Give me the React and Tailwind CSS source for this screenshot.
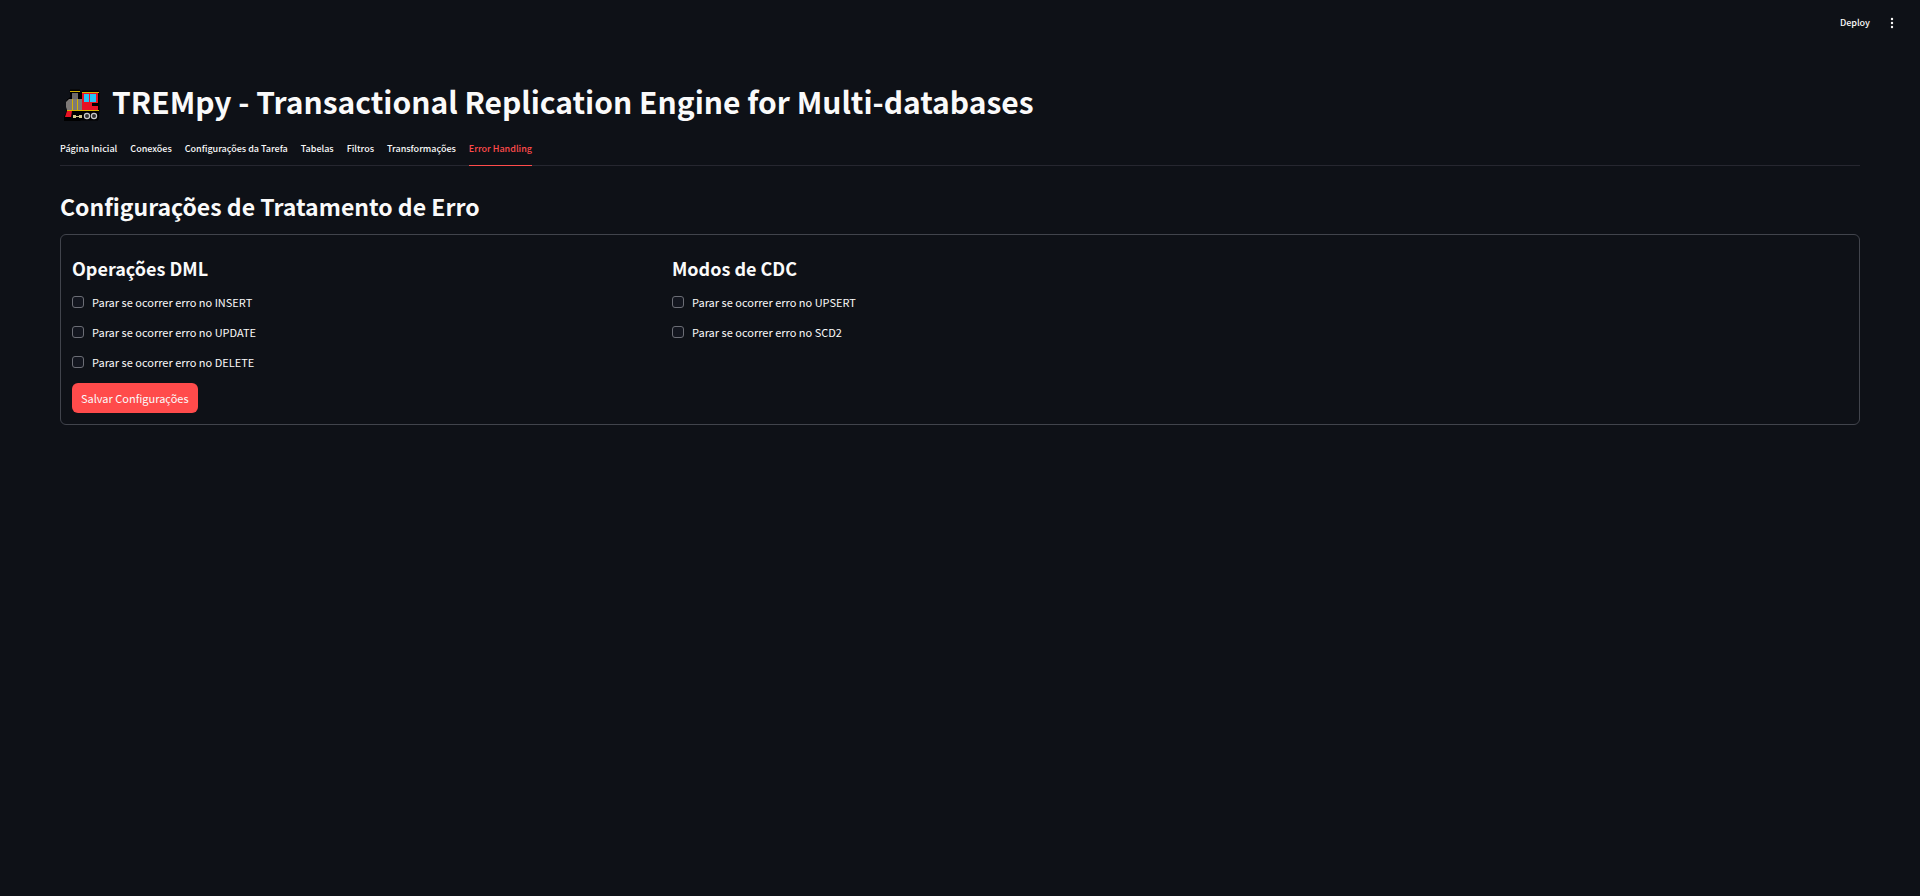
const tabs = [
  'Página Inicial',
  'Conexões',
  'Configurações da Tarefa',
  'Tabelas',
  'Filtros',
  'Transformações',
  'Error Handling',
];

const groups = [
  { title: 'Operações DML', options: ['INSERT', 'UPDATE', 'DELETE'] },
  { title: 'Modos de CDC', options: ['UPSERT', 'SCD2'] },
];

function Locomotive() {
  return (
    <svg viewBox="0 0 36 32" className="h-8 w-9 shrink-0 self-end" aria-hidden="true">
      <path
        d="M6 1h10v3h2V2h17v20l-1 9H17l-3 1H0v-4l3-5V11l4-3z"
        fill="#000"
        stroke="#000"
        strokeLinejoin="round"
      />
      <path d="M8 4h6v6H8z" fill="#6e6a68" />
      <path d="M5 10h13v11H3l-1-3v-5z" fill="#7d7977" />
      <path d="M18 4h16v10h-6v3h6v4H18z" fill="#e81224" />
      <path d="M20 5h5v8h-5zM26 5h6v8h-6z" fill="#26c4f5" />
      <path d="M6 2h10v1H6zM18 3h17v1H18zM8 10h1v11H8zM13 10h1v11h-1zM3 21h32v1H3z" fill="#d6b300" />
      <path d="M3 22h5l-1 6H1z" fill="#e81224" />
      <path d="M9 26h3v1h3v-1h3v3h-3v-1h-3v1H9z" fill="#d5c98c" />
      <circle cx="23" cy="27" r="2.6" fill="#333" stroke="#c9c9c9" strokeWidth="1.2" />
      <circle cx="30" cy="27" r="2.6" fill="#333" stroke="#c9c9c9" strokeWidth="1.2" />
    </svg>
  );
}

export default function App() {
  return (
    <div className="min-h-screen bg-[#0e1117] font-['Noto_Sans_CJK_JP',sans-serif] text-[#fafafa]">
      <header className="flex h-[45px] items-center justify-end gap-2.5 pr-5">
        <button type="button" className="px-1 text-[9px] leading-4 font-medium">Deploy</button>
        <button type="button" aria-label="Menu" className="flex w-4 justify-center">
          <svg viewBox="0 0 12 12" className="size-3" fill="currentColor" aria-hidden="true">
            <circle cx="6" cy="2" r="1.2" />
            <circle cx="6" cy="6" r="1.2" />
            <circle cx="6" cy="10" r="1.2" />
          </svg>
        </button>
      </header>

      <main className="px-[60px] pt-9">
        <h1 className="flex h-10 items-center gap-3 pl-1 text-[30px] font-bold">
          <Locomotive />
          <span>TREMpy - Transactional Replication Engine for Multi-databases</span>
        </h1>

        <nav className="mt-3 flex gap-[13px] border-b border-[#262730]">
          {tabs.map((tab) => (
            <a
              key={tab}
              href="#"
              className={
                tab === 'Error Handling'
                  ? '-mb-px border-b border-[#ff4b4b] text-[9px] leading-8 font-medium text-[#ff4b4b]'
                  : '-mb-px border-b border-transparent text-[9px] leading-8 font-medium'
              }
            >
              {tab}
            </a>
          ))}
        </nav>

        <h2 className="mt-5 text-[23px] leading-10 font-semibold">Configurações de Tratamento de Erro</h2>

        <form className="mt-2 rounded-md border border-[#41444c] px-[11px] pt-[19px] pb-[11px]">
          <div className="grid grid-cols-3 gap-6">
            {groups.map((group) => (
              <section key={group.title}>
                <h3 className="text-[18px] leading-7 font-semibold">{group.title}</h3>
                <div className="mt-[11px] flex flex-col gap-3">
                  {group.options.map((option) => (
                    <label key={option} className="flex h-[18px] items-center gap-2 text-[11px] leading-4">
                      <input
                        type="checkbox"
                        className="size-3 appearance-none rounded-[3px] border border-[#6b6d75] bg-[#13161f] checked:bg-[#ff4b4b]"
                      />
                      {`Parar se ocorrer erro no ${option}`}
                    </label>
                  ))}
                </div>
              </section>
            ))}
          </div>
          <button type="button" className="mt-3 h-[30px] rounded-md bg-[#ff4b4b] px-[9px] text-[11px] leading-4">
            Salvar Configurações
          </button>
        </form>
      </main>
    </div>
  );
}
